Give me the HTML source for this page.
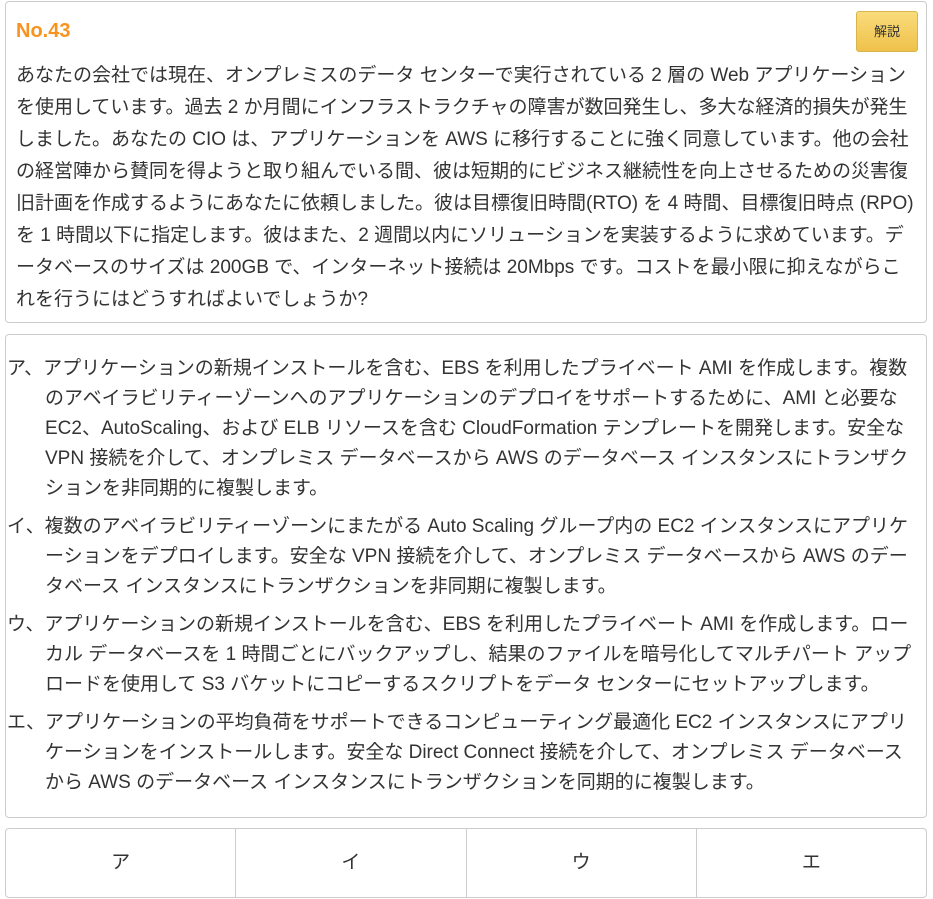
<!DOCTYPE html>
<html><head><meta charset="utf-8"><style>
body{margin:0;background:#fff;font-family:"Liberation Sans","Noto Sans CJK JP",sans-serif;color:#333;width:933px;height:899px;overflow:hidden;position:relative}
.box{position:absolute;left:5px;width:920px;border:1px solid #ccc;border-radius:4px;background:#fff}
#b1{top:1px;height:320px}
#b2{top:334px;height:482px}
#b3{top:828px;height:68px;display:flex}
.no{position:absolute;left:10px;top:18px;font-size:20px;font-weight:bold;color:#f7931e}
.btn{position:absolute;left:850px;top:9px;width:60px;height:39px;border:1px solid #d9b44a;border-radius:3px;background:linear-gradient(#f9dc7c,#efc14a);font-size:13px;color:#333;text-align:center;line-height:39px}
.q{position:absolute;left:10px;top:58px;font-size:19px;line-height:32px;white-space:nowrap}
.items{position:absolute;left:1px;top:19px;font-size:19px;line-height:30px;white-space:nowrap}
.it{padding-left:38px;text-indent:-38px;margin-bottom:8px}
.cell{flex:1;border-right:1px solid #ccc;text-align:center;line-height:68px;font-size:19px}
.cell:last-child{border-right:none}
</style></head><body>
<div class="box" id="b1">
<div class="no">No.43</div>
<div class="btn">解説</div>
<div class="q">あなたの会社では現在、オンプレミスのデータ センターで実行されている 2 層の Web アプリケーション<br>を使用しています。過去 2 か月間にインフラストラクチャの障害が数回発生し、多大な経済的損失が発生<br>しました。あなたの CIO は、アプリケーションを AWS に移行することに強く同意しています。他の会社<br>の経営陣から賛同を得ようと取り組んでいる間、彼は短期的にビジネス継続性を向上させるための災害復<br>旧計画を作成するようにあなたに依頼しました。彼は目標復旧時間(RTO) を 4 時間、目標復旧時点 (RPO)<br>を 1 時間以下に指定します。彼はまた、2 週間以内にソリューションを実装するように求めています。デ<br>ータベースのサイズは 200GB で、インターネット接続は 20Mbps です。コストを最小限に抑えながらこ<br>れを行うにはどうすればよいでしょうか?</div>
</div>
<div class="box" id="b2">
<div class="items">
<div class="it">ア、アプリケーションの新規インストールを含む、EBS を利用したプライベート AMI を作成します。複数<br>のアベイラビリティーゾーンへのアプリケーションのデプロイをサポートするために、AMI と必要な<br>EC2、AutoScaling、および ELB リソースを含む CloudFormation テンプレートを開発します。安全な<br>VPN 接続を介して、オンプレミス データベースから AWS のデータベース インスタンスにトランザク<br>ションを非同期的に複製します。</div>
<div class="it">イ、複数のアベイラビリティーゾーンにまたがる Auto Scaling グループ内の EC2 インスタンスにアプリケ<br>ーションをデプロイします。安全な VPN 接続を介して、オンプレミス データベースから AWS のデー<br>タベース インスタンスにトランザクションを非同期に複製します。</div>
<div class="it">ウ、アプリケーションの新規インストールを含む、EBS を利用したプライベート AMI を作成します。ロー<br>カル データベースを 1 時間ごとにバックアップし、結果のファイルを暗号化してマルチパート アップ<br>ロードを使用して S3 バケットにコピーするスクリプトをデータ センターにセットアップします。</div>
<div class="it">エ、アプリケーションの平均負荷をサポートできるコンピューティング最適化 EC2 インスタンスにアプリ<br>ケーションをインストールします。安全な Direct Connect 接続を介して、オンプレミス データベース<br>から AWS のデータベース インスタンスにトランザクションを同期的に複製します。</div>
</div>
</div>
<div class="box" id="b3">
<div class="cell">ア</div><div class="cell">イ</div><div class="cell">ウ</div><div class="cell">エ</div>
</div>
</body></html>
